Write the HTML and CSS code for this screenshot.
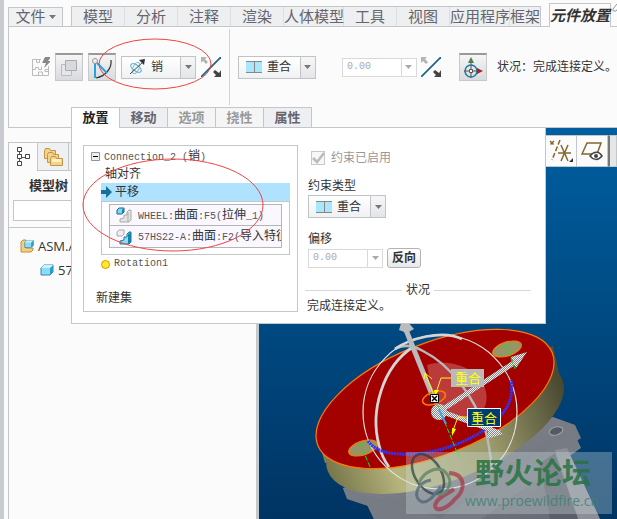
FILE: index.html
```html
<!DOCTYPE html>
<html lang="zh-CN">
<head>
<meta charset="utf-8">
<title>元件放置</title>
<link rel="stylesheet" href="styles.css">
</head>
<body>
<svg class="defs" aria-hidden="true">
  <defs>
    <symbol id="flip" viewBox="0 0 20 20"><path d="M0 20 20 0" stroke="#1d658d" stroke-width="1.8"/><path d="M0 0h6L4 2l3 3-2 2-3-3-2 2z" fill="#b4b4b4"/><path d="M20 20h-7l2-2-3-3 2-2 4 3 2-3z" fill="#444"/></symbol>
    <symbol id="coincide" viewBox="0 0 16 12"><path d="M0 0h16v12H0z" fill="#a9e8fb"/><path d="M0 .5h16M0 11.5h16M8.500 0v12" stroke="#888" fill="none"/></symbol>
    <symbol id="drop" viewBox="0 0 7 4"><path d="M0 0h7L3.500 4z" fill="currentColor"/></symbol>
    <symbol id="cube" viewBox="0 0 14 12"><path d="M1 4 4 1h9v7l-3 3H1z" fill="#8adcf8" stroke="#3587a8"/><path d="M10 4v7l3-3V1z" fill="#2d9bc8"/><path d="M1 4h9l3-3H4z" fill="#c8f4ff"/></symbol>
    <symbol id="refs-part" viewBox="0 0 16 16"><path d="M1 3 3 1h5v4L6 7H1z" fill="#7fd7f3" stroke="#17698b"/><path d="M6 3v4l2-2V1z" fill="#1682ac"/><path d="M4 15V12l4-1V8h3V5l2-2h2v10l-2 2z" fill="#e4e4e4" stroke="#aaa"/><path d="M12 5v10" stroke="#aaa"/></symbol>
    <symbol id="refs-asm" viewBox="0 0 16 16"><path d="M1 3 3 1h5v4L6 7H1z" fill="#eee" stroke="#aaa"/><path d="M4 15V12l4-1V8h3V5l2-2h2v10l-2 2z" fill="#8adcf8" stroke="#17789e"/><path d="M12 5 15 3v10l-3 2z" fill="#1682ac"/></symbol>
  </defs>
</svg>
<div class="app">
  <header class="ribbon">
    <div class="menu">
      <button class="file">文件<svg class="drop"><use href="#drop"/></svg></button>
      <nav class="tabs">
        <button>模型</button><button>分析</button><button>注释</button><button>渲染</button><button class="wide">人体模型</button><button>工具</button><button>视图</button><button class="wide">应用程序</button><button class="narrow">框架</button>
      </nav>
      <button class="current">元件放置</button>
      <svg class="pen" viewBox="0 0 6 12"><path d="M1 7 5 2l3 2-4 5H1z" fill="#fff" stroke="#999"/></svg>
    </div>
    <div class="tools">
      <div class="group first">
        <svg class="puzzle" viewBox="0 0 18 20"><path d="M9 2.500H.5v16h16V9M.5 12.500h3v-2h3v2h3v-3M6.500 18v-3h4v3M4.500 2.500v3h3v-3M16 12.500h-3v2h3" fill="none" stroke="#bbb"/><path d="m13 0 6 0-3 4h3l-7 7 2-5h-4z" fill="#888"/></svg>
        <button class="tool" aria-label="约束转换"><svg width="18" height="18"><path d="M1.500 5.500h10v11h-10z" fill="#e5e6e8" stroke="#bbb"/><path d="M5.500 1.500h11v10h-11z" fill="#d8d9dc" stroke="#aaa"/></svg></button>
        <button class="tool" aria-label="拖动器"><svg width="22" height="22"><path d="M20 3c1 8-5 16-15 18" fill="none" stroke="#333" stroke-width="1.200"/><path d="M4 4v17M4 4l12 12" stroke="#23a5dc" stroke-width="2"/><circle cx="4" cy="4" r="2.500" fill="#eee" stroke="#999"/></svg></button>
        <label class="combo pin"><svg width="17" height="16"><ellipse cx="7" cy="9" rx="6" ry="3" fill="none" stroke="#36a9cf" transform="rotate(35 7 9)"/><ellipse cx="7" cy="9" rx="6" ry="3" fill="none" stroke="#7abbd4" transform="rotate(-65 7 9)"/><path d="M1 15 14 3" stroke="#444"/><path d="m10 1 6-1-1 6z" fill="#333"/></svg><select aria-label="连接类型"><option>销</option></select><span class="open"><svg class="drop"><use href="#drop"/></svg></span></label>
        <svg class="flip"><use href="#flip"/></svg>
      </div>
      <div class="group">
        <label class="combo"><svg width="16" height="12"><use href="#coincide"/></svg><select aria-label="约束"><option>重合</option></select><span class="open"><svg class="drop"><use href="#drop"/></svg></span></label>
        <label class="number ribbon-number"><input aria-label="偏移值" value="0.00" disabled><span class="open"><svg class="drop"><use href="#drop"/></svg></span></label>
        <svg class="flip"><use href="#flip"/></svg>
      </div>
      <button class="tool" aria-label="三维拖动器"><svg width="22" height="22"><circle cx="9" cy="14" r="6" fill="none" stroke="#217b9f" stroke-width="1.500"/><path d="M9 21V4M2 14h14" stroke="#555"/><path d="m9 0 3 6H6z" fill="#488348"/><path d="m21 14-6-3v6z" fill="#a22"/><path d="M7.500 12.500h3v3h-3z" fill="#fff" stroke="#555"/></svg></button>
      <p class="status">状况：完成连接定义。</p>
    </div>
    <nav class="subtabs"><button class="on">放置</button><button>移动</button><button class="off">选项</button><button class="off">挠性</button><button>属性</button></nav>
    <svg class="mark mark-top" viewBox="0 0 114 52"><ellipse cx="57" cy="26" rx="56" ry="25"/></svg>
  </header>
  <main class="workspace">
    <aside class="sidebar">
      <div class="sidetabs">
        <button class="on" aria-label="模型树"><svg width="14" height="20"><path d="M3.500 5v11M5 10.500h5" stroke="#555"/><path d="M1.500.5h4v4h-4zM1.500 7.500h4v4h-4zM1.500 14.500h4v4h-4zM9.500 7.500h4v4h-4z" fill="#fff" stroke="#444"/></svg></button>
        <button aria-label="文件夹"><svg width="20" height="20"><g fill="#f3d28b" stroke="#c39549"><path d="M1.500 3.500v8h11v-8h-5l-1-2h-4z"/><path d="M4.500 7.500v8h11v-8h-5l-1-2h-4z"/><path d="M7.500 11.500v7h12v-7h-6l-1-2h-4z"/></g><path d="M9 12h9v3H9z" fill="#fff0c2"/></svg></button>
        <button aria-label="收藏"></button>
      </div>
      <h2>模型树</h2>
      <div class="find"><input class="search" aria-label="搜索"></div>
      <ul class="model">
        <li><svg width="14" height="14"><path d="M1 3 3 1h3v8h7v2l-2 2H1z" fill="#f4cf83" stroke="#bd8c3e"/><svg x="4" y="0" width="10" height="10" viewBox="0 0 14 12"><use href="#cube"/></svg></svg>ASM.ASM</li>
        <li class="child"><svg width="14" height="12"><use href="#cube"/></svg>57HS22-A</li>
      </ul>
    </aside>
    <section class="viewport">
      <svg class="scene" viewBox="259 128 358 391" preserveAspectRatio="xMinYMin meet">
        <defs>
          <linearGradient id="side" x1="0" x2="1"><stop stop-color="#77764a"/><stop offset=".25" stop-color="#b6b57d"/><stop offset=".65" stop-color="#99986a"/><stop offset="1" stop-color="#47462f"/></linearGradient>
          <linearGradient id="metal" x1="0" x2="1" y2="1"><stop stop-color="#8a8d94"/><stop offset="1" stop-color="#656973"/></linearGradient>
          <pattern id="mesh" width="2" height="2" patternUnits="userSpaceOnUse"><path d="M0 0h2v2H0z" fill="#888"/><path d="M0 0h1v1H0zM1 1h1v1H1z" fill="#eee"/></pattern>
        </defs>
        <path d="m343 488 4 11 21 7 6 13h226l-35-70 16-11-6-13-22-8z" fill="url(#metal)"/>
        <path d="m343 488 97 30 130-86 5 3 6 13-100 71H374l-7-14-20-7z" fill="#777b84"/>
        <path d="m555 450 12-2 33 71h-22z" fill="#8c8f97"/><path d="m540 463 15-10 23 66h-28z" fill="#5b5f69"/>
        <ellipse cx="556" cy="431" rx="7" ry="4" fill="#555a63" stroke="#a3a7ae" transform="rotate(-15 556 431)"/>
        <g fill="url(#side)"><path d="m316 432 9 31 238-71-10-46z"/><ellipse cx="445" cy="425" rx="126" ry="55" transform="rotate(-21.500 445 425)"/></g>
        <ellipse cx="435" cy="399" rx="126" ry="56" transform="rotate(-21.500 435 399)" fill="#a30000" stroke="#ff7800" stroke-width="1.200"/>
        <g fill="#969565" stroke="#ff7800"><ellipse cx="507" cy="349" rx="15" ry="7" transform="rotate(-18 507 349)"/><ellipse cx="363" cy="448" rx="15" ry="7" transform="rotate(-18 363 448)"/></g>
        <path d="M427 365c23-7 54 3 59 27 4 21-14 30-31 25l-20-9z" fill="#c85a5a" opacity=".65"/>
        <g fill="none">
          <circle cx="440" cy="412" r="77" stroke="#e5e5e5" stroke-width="1.200"/>
          <path d="M397 348c8-4 17-2 26 3 28 14 51 46 62 78 4 14 6 30 7 41" stroke="#b9b9b9" stroke-width="2.500"/>
          <path d="M395 349c14-10 47-20 67-10M413 347c-31 20-43 65-34 98 2 9 7 18 10 22" stroke="#d5d5d5" stroke-width="2.800"/>
          <path d="M368 441c8 11 23 14 45 13 36-2 81-22 95-49 4-9 4-16 3-25" stroke="#3034ff" stroke-width="3" stroke-dasharray="2 .7"/>
        </g>
        <path d="m406 330 27 67" stroke="#bbb" stroke-width="5"/><path d="m399 330 3-10h4l8 9-7 4z" fill="#bbb"/>
        <path d="m440 411 80-52M440 411l60 22" stroke="url(#mesh)" stroke-width="5"/><path d="m511 357 16-5-11 16zM488 425l15 9-16 5z" fill="url(#mesh)"/><circle cx="439" cy="412" r="8" fill="url(#mesh)"/>
        <path d="m434 396 25 61M506 345l9 24M360 443l10 24" stroke="#00ee20" stroke-dasharray="5 2"/><path d="m439 410 7 14" stroke="#42a0f0" stroke-width="2"/>
        <ellipse cx="434" cy="398" rx="12" ry="6" transform="rotate(-20 434 398)" fill="none" stroke="#ff7800" stroke-width="1.500"/>
        <path d="m433 393-8-20m-1 6 1-6 7 6M451 378h-10l-5 15M468 417h-10l-6 16" stroke="#fff12a" fill="none"/><path d="m435 396-1-6h5zM452 436v-8l4 1z" fill="#ff0"/>
        <path d="M430.500 394.500h8v8h-8z" fill="#fff" stroke="#000"/><path d="m432 396 5 5m0-5-5 5" stroke="#000" stroke-width="1.500"/>
        <path d="M451 369h33v18h-33z" fill="#b9b9b9"/><path d="M467.500 408.500h33v18h-33z" fill="#003b73" stroke="#fff"/>
        <g class="tag"><text x="455" y="383">重合</text><text x="471" y="423">重合</text></g>
        <g class="watermark"><path d="M406 452h206v62H406z" fill="#d0e0e2" opacity=".33"/>
          <g fill="none" opacity=".7"><ellipse cx="428" cy="474" rx="13" ry="22" transform="rotate(-32 428 474)" stroke="#263f3c" stroke-width="2.500"/><path d="M431 480c-16 3-18 19-9 22 9 1 15-12 19-15" stroke="#496174" stroke-width="3"/><path d="M449 473c17 1 17 17 6 26-8 10-20 14-20 6 2-8 13-11 19-16" stroke="#a83345" stroke-width="4"/><path d="M419 483c5-12 20-19 28-9 7 10 0 20-9 21" stroke="#567f61" stroke-width="3"/></g>
          <text class="brand" x="475" y="484">野火论坛</text><text class="url" x="465" y="506">www.proewildfire.cn</text></g>
      </svg>
      <div class="viewtools">
        <button aria-label="基准显示"><svg width="26" height="24"><path d="m2 2 4 4m0-4L2 6M12 1 4 21" stroke="#86652d" stroke-width="1.500" stroke-dasharray="5 2" fill="none"/><path d="M10 14h13M13 6l7 16M20 6l-7 16" stroke="#86652d" stroke-width="1.500"/><path d="M25 19v4h-4z" fill="#333"/></svg></button>
        <button aria-label="平面显示"><svg width="22" height="22"><path d="M1 14h15l4-11H6z" fill="none" stroke="#86652d" stroke-width="1.500"/><path d="M9 16c4-5 9-5 12 0-4 5-9 4-12 0z" fill="#fff" stroke="#444" stroke-width="1.500"/><circle cx="15" cy="16" r="2" fill="#444"/></svg></button>
        <button class="cut" aria-label="注释显示"></button>
      </div>
    </section>
    <section class="panel">
      <div class="sets">
        <div class="line"><svg width="9" height="9"><path d="M.5.5h8v8h-8z" fill="#eee" stroke="#8796ad"/><path d="M2 4.500h5" stroke="#000"/></svg><span><span class="mono">Connection_2 (</span>销<span class="mono">)</span></span></div>
        <div class="line inner">轴对齐</div>
        <div class="line selected"><svg width="11" height="12"><path d="M0 4h5V0l6 6-6 6V8H0z" fill="#176f9b"/></svg>平移</div>
        <div class="refs">
          <div class="ref"><svg width="16" height="16"><use href="#refs-part"/></svg><span><span class="mono">WHEEL:</span>曲面<span class="mono">:F5(</span>拉伸<span class="mono">_1)</span></span></div>
          <div class="ref"><svg width="16" height="16"><use href="#refs-asm"/></svg><span><span class="mono">57HS22-A:</span>曲面<span class="mono">:F2(</span>导入特征</span></div>
        </div>
        <div class="line rotation"><i class="dot"></i><span class="mono">Rotation1</span></div>
        <div class="line new">新建集</div>
        <svg class="mark mark-list" viewBox="0 0 182 94"><ellipse cx="91" cy="47" rx="90" ry="46"/></svg>
      </div>
      <form class="form">
        <div class="check"><span class="box"><input type="checkbox" id="enabled" checked disabled><svg class="tick" viewBox="0 0 14 12"><path d="m2 6 4 4 7-9" fill="none" stroke="#bbb" stroke-width="2.500"/></svg></span><label for="enabled">约束已启用</label></div>
        <label class="caption" for="kind">约束类型</label>
        <div class="combo"><svg width="16" height="12"><use href="#coincide"/></svg><select id="kind"><option>重合</option></select><span class="open"><svg class="drop"><use href="#drop"/></svg></span></div>
        <label class="caption" for="offset">偏移</label>
        <div class="pair"><div class="number"><input id="offset" value="0.00" disabled><span class="open"><svg class="drop"><use href="#drop"/></svg></span></div><button type="button" class="reverse">反向</button></div>
        <div class="rule">状况</div>
        <p>完成连接定义。</p>
      </form>
    </section>
  </main>
</div>
</body>
</html>
```
FILE: styles.css
```css
* { box-sizing: border-box; }
body { margin: 0; background: #fbfbfb; color: #333; font: 12px/18px "Liberation Sans", "Noto Sans CJK SC", sans-serif; overflow: hidden; }
button, input, select { font: inherit; color: inherit; margin: 0; padding: 0; border: 0; background: none; border-radius: 0; }
svg { display: block; flex: none; }
p, h2, ul { margin: 0; padding: 0; }
.defs { position: absolute; width: 0; height: 0; }
.app { min-height: 100vh; display: flex; flex-direction: column; border-left: 4px solid #c8ccd1; padding-left: 4px; }
.ribbon { position: relative; }
.menu { display: flex; align-items: flex-end; height: 27px; border-bottom: 1px solid #c4c7ca; font-size: 15px; color: #65656d; }
.menu button { height: 19px; line-height: 18px; white-space: nowrap; flex: none; }
.menu .file { width: 55px; border: 1px solid #c4c7ca; border-bottom: 0; background: #f0f1f3; display: flex; align-items: center; justify-content: center; gap: 3px; }
.drop { width: 7px; height: 4px; color: #777; }
.tabs { display: flex; flex: none; margin-left: 8px; border: 1px solid #c4c7ca; border-bottom: 0; background: #eeeff1; }
.tabs button { width: 53px; border-right: 1px solid #dcdfe2; }
.tabs .wide { width: 60px; }
.tabs .narrow { width: 30px; border: 0; }
.menu .current { margin: 0 0 -1px 8px; width: 62px; height: 24px; border: 1px solid #c4c7ca; border-bottom: 0; background: #fbfbfb; font-weight: bold; font-style: italic; color: #333; }
.pen { width: 6px; height: 12px; margin: 0 0 12px 1px; }
.tools { display: flex; align-items: center; height: 80px; border-left: 1px solid #c4c7ca; }
.group { display: flex; align-items: center; height: 76px; padding-left: 8px; }
.first { width: 222px; padding-left: 23px; border-right: 1px solid #d0d2d4; gap: 5px; }
.puzzle { width: 18px; height: 20px; }
.tool { width: 28px; height: 28px; display: flex; align-items: center; justify-content: center; border: 1px solid #c6c8ca; border-top: 2px solid #999; background: linear-gradient(#f5f5f6, #d8dade); flex: none; }
.flip { width: 20px; height: 20px; }
.combo { display: flex; align-items: center; width: 78px; height: 23px; border: 1px solid #c1c4c7; background: linear-gradient(#fff, #f0f1f2); padding-left: 7px; flex: none; }
.combo select { appearance: none; flex: 1; min-width: 0; height: 100%; padding-left: 5px; }
.open { align-self: stretch; width: 15px; display: grid; place-items: center; border-left: 1px solid #c1c4c7; background: linear-gradient(#f7f7f8, #e4e5e9); flex: none; }
.pin { width: 75px; }
.number { display: flex; align-items: center; width: 75px; height: 19px; border: 1px solid #d7d9db; background: #fff; color: #aaa; flex: none; }
.number input { min-width: 0; flex: 1; padding-left: 4px; font: 10px/16px "Liberation Mono", monospace; }
.number .open { border-color: #d7d9db; background: #fff; }
.number .drop { color: #aaa; }
.ribbon-number { margin: 0 4px 0 26px; }
.tools > .tool { margin: 0 10px 0 18px; }
.status { white-space: nowrap; }
.subtabs { display: flex; height: 21px; padding-left: 62px; border-left: 1px solid #c4c7ca; border-bottom: 1px solid #c4c7ca; }
.subtabs button { width: 48px; height: 20px; border: 1px solid #c4c7ca; border-bottom: 0; border-left: 0; background: #eeeff2; font-weight: bold; font-size: 13px; line-height: 18px; color: #65656d; }
.subtabs .on { width: 49px; height: 21px; border-left: 1px solid #c4c7ca; background: #fff; color: #222; }
.subtabs .off { color: #999; background: #f5f5f6; }
.mark { position: absolute; fill: none; stroke: #ee4545; stroke-width: 1; pointer-events: none; }
.mark-top { width: 114px; height: 52px; left: 90px; top: 38px; }
.workspace { position: relative; flex: 1; display: grid; grid-template-columns: 251px minmax(0, 1fr); }
.sidebar { display: flex; flex-direction: column; border-right: 3px solid #c4c9ce; padding-top: 14px; }
.sidetabs { display: flex; height: 29px; }
.sidetabs button { width: 31px; border: 1px solid #c4c7ca; border-left: 0; background: #eff0f2; display: grid; place-items: center; }
.sidetabs .on { width: 30px; background: #fbfbfb; border-left: 1px solid #c4c7ca; border-bottom: 0; }
.sidebar h2 { font-size: 13px; line-height: 18px; padding: 6px 0 5px 20px; border-left: 1px solid #c4c7ca; }
.find { border-left: 1px solid #c4c7ca; padding: 0 4px 6px; }
.search { display: block; width: 100%; height: 21px; border: 1px solid #c4c7ca; background: #fff; }
.model { flex: 1; list-style: none; border-left: 1px solid #c4c7ca; border-top: 1px solid #c4c7ca; padding-top: 6px; font: 13px/24px "Open Sans", sans-serif; }
.model li { display: flex; align-items: center; gap: 4px; padding-left: 11px; }
.model .child { padding-left: 31px; }
.viewport { position: relative; background: linear-gradient(#005fa0, #003463); overflow: hidden; }
.scene { position: absolute; inset: 0; width: 100%; }
.tag { font: 13px "Noto Sans CJK SC", sans-serif; fill: #ff0; }
.brand { font: bold 29px "Noto Sans CJK SC", sans-serif; fill: #287344; opacity: .85; }
.url { font: 14px "Open Sans", sans-serif; fill: #448078; opacity: .85; }
.viewtools { position: relative; display: flex; justify-content: flex-end; margin-top: 7px; height: 32px; }
.viewtools button { width: 31px; border: 1px solid #c4c7ca; border-left: 0; background: #fbfbfb; display: grid; place-items: center; flex: none; }
.viewtools .cut { width: 9px; border-left: 2px solid #777; background: #e5e6e8; }
.panel { position: absolute; left: 63px; top: 0; width: 475px; display: flex; align-items: flex-start; padding: 17px 14px 9px 11px; gap: 7px; border: 1px solid #c4c7ca; border-top: 0; background: #fff; }
.sets { position: relative; width: 215px; flex: none; border: 1px solid #c4c7ca; padding: 1px 0 4px; }
.line { display: flex; align-items: center; height: 18px; line-height: 18px; padding-left: 7px; gap: 4px; white-space: nowrap; }
.mono { font: 10px/16px "Liberation Mono", monospace; white-space: pre; color: #555; }
.inner { padding-left: 21px; }
.selected { margin: 0 7px 0 17px; padding-left: 0; background: #afe2ff; gap: 3px; }
.refs { margin: 0 7px 0 17px; border: 1px solid #c4c7ca; height: 54px; padding: 2px 7px; }
.ref { display: flex; align-items: center; gap: 6px; height: 22px; padding-left: 6px; border: 1px solid #b3b5b8; background: #faf7ff; white-space: nowrap; overflow: hidden; }
.ref + .ref { border-top: 0; }
.rotation { padding-left: 17px; }
.dot { width: 9px; height: 9px; border: 1px solid #e99100; border-radius: 50%; background: #ffec25; }
.new { margin-top: 16px; padding-left: 12px; }
.mark-list { width: 182px; height: 94px; left: -2px; top: 12px; }
.form { flex: 1; min-width: 0; }
.form > .combo, .form > .pair { margin-left: 3px; }
.check { display: flex; align-items: center; gap: 6px; padding: 4px 0 0 6px; color: #999; }
.box { display: grid; place-items: center; }
.box > * { grid-area: 1 / 1; }
.box input { appearance: none; width: 14px; height: 14px; border: 1px solid #c8c8c8; background: #f7f7f7; }
.tick { width: 14px; height: 12px; }
.caption { display: block; padding: 10px 0 0 3px; line-height: 18px; }
.combo + .caption { padding-top: 12px; }
.pair { display: flex; gap: 4px; align-items: center; }
.reverse { width: 34px; height: 20px; border: 1px solid #b0b2b5; border-radius: 3px; background: linear-gradient(#fff, #e7e8ea); font-weight: bold; line-height: 16px; }
.rule { display: flex; align-items: center; gap: 4px; margin-top: 14px; line-height: 16px; }
.rule::before, .rule::after { content: ""; flex: 1; border-top: 1px solid #d5d7d9; }
.form p { padding-left: 2px; line-height: 16px; }
```
